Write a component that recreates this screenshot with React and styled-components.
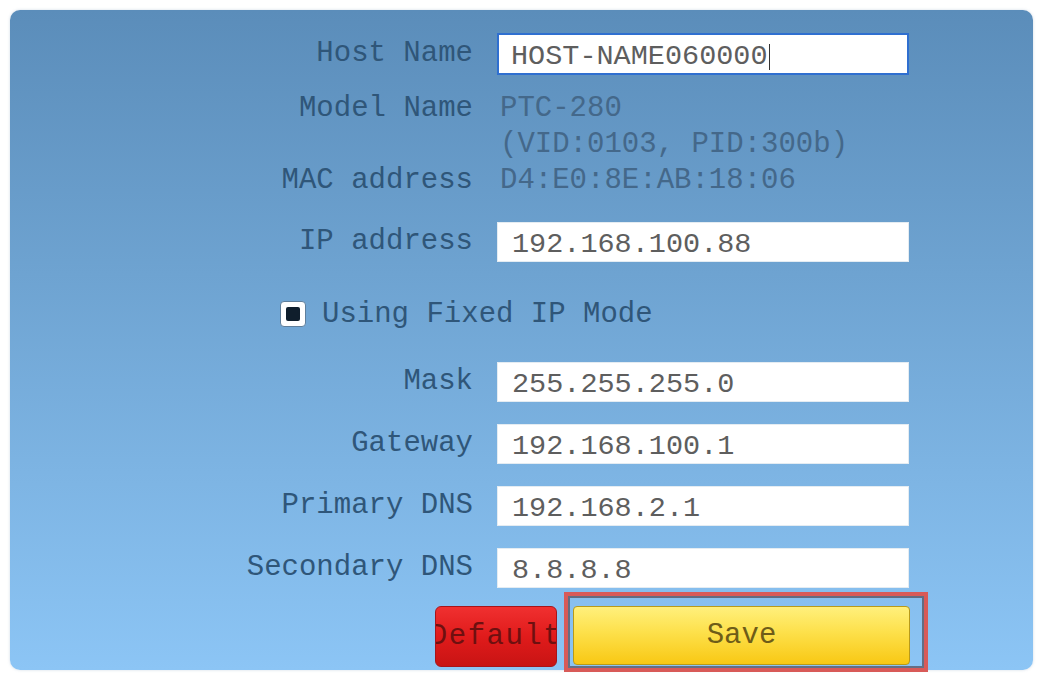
// 네트워크 설정 패널
import React from "react";
import styled, { createGlobalStyle } from "styled-components";

const GlobalStyle = createGlobalStyle`
  html, body {
    margin: 0;
    padding: 0;
    background: #ffffff;
  }
  body {
    font-family: "Liberation Mono", "Courier New", monospace;
  }
`;

const Page = styled.div`
  width: 1037px;
  height: 676px;
  padding: 10px 4px 6px 10px;
  box-sizing: border-box;
`;

const Panel = styled.div`
  position: relative;
  width: 1023px;
  height: 660px;
  box-sizing: border-box;
  border-radius: 10px;
  background: linear-gradient(180deg, #5b8dba 0%, #6ea3d1 40%, #8cc5f5 100%);
  box-shadow: 0 0 3px rgba(120, 150, 180, 0.35);
  padding-top: 23px;
  display: flex;
  flex-direction: column;
`;

const Row = styled.div`
  display: grid;
  grid-template-columns: 463px 412px;
  column-gap: 24px;
  align-items: center;
  height: ${(p) => p.$h || 40}px;
  margin-top: ${(p) => p.$mt || 0}px;
`;

const Label = styled.div`
  text-align: right;
  font-size: 29px;
  color: #2f5679;
  white-space: nowrap;
  line-height: 36px;
`;

const Value = styled.div`
  font-size: 29px;
  color: #44688a;
  white-space: nowrap;
  line-height: 36px;
  padding-left: 3px;
`;

const Field = styled.div`
  height: 100%;
  box-sizing: border-box;
  background: #ffffff;
  border: ${(p) => (p.$focus ? "2px solid #2f6fd0" : "1px solid #e4ecf2")};
  display: flex;
  align-items: center;
  padding-left: ${(p) => (p.$focus ? 12 : 14)}px;
  padding-top: 5px;
  font-family: "Liberation Mono", monospace;
  font-size: 28.5px;
  color: #5e5e5e;
  white-space: nowrap;
`;

const Caret = styled.span`
  display: inline-block;
  width: 1px;
  height: 26px;
  background: #333;
  margin-left: 1px;
`;

const CheckRow = styled.div`
  display: flex;
  align-items: center;
  height: 40px;
  margin-top: 32px;
  padding-left: 270px;
  gap: 16px;
`;

const CheckBox = styled.div`
  width: 26px;
  height: 26px;
  box-sizing: border-box;
  background: #ffffff;
  border: 1px solid #5f7f9c;
  border-radius: 4px;
  display: flex;
  align-items: center;
  justify-content: center;

  &::after {
    content: "";
    width: 14px;
    height: 14px;
    border-radius: 2px;
    background: #0f1e2c;
  }
`;

const CheckText = styled.span`
  font-size: 29px;
  color: #2f5679;
  white-space: nowrap;
`;

const ButtonRow = styled.div`
  display: flex;
  align-items: flex-start;
  margin-top: 18px;
  padding-left: 425px;
  gap: 16px;
`;

const DefaultButton = styled.div`
  width: 122px;
  height: 61px;
  box-sizing: border-box;
  border-radius: 6px;
  border: 1px solid #a8141a;
  background: linear-gradient(180deg, #f03030 0%, #e01b1b 50%, #c81414 100%);
  display: flex;
  align-items: center;
  justify-content: center;
  overflow: hidden;
  font-size: 29px;
  letter-spacing: 1.5px;
  color: #6e1010;
  white-space: nowrap;
`;

const SaveWrap = styled.div`
  position: relative;
`;

const SaveButton = styled.div`
  width: 337px;
  height: 59px;
  box-sizing: border-box;
  border-radius: 4px;
  border: 1px solid #b89a1a;
  background: linear-gradient(180deg, #fff07c 0%, #fde04a 45%, #f8c814 100%);
  display: flex;
  align-items: center;
  justify-content: center;
  font-size: 29px;
  color: #6e5c18;
`;

const Highlight = styled.div`
  position: absolute;
  left: -9px;
  top: -14px;
  width: 364px;
  height: 80px;
  box-sizing: border-box;
  border: 4px solid #d85a58;
  box-shadow: inset 0 0 0 2px rgba(70, 40, 40, 0.55);
  pointer-events: none;
`;

const App = () => {
  return (
    <>
      <GlobalStyle />
      <Page>
        <Panel>
          <Row $h={36}>
            <Label>Host Name</Label>
            <Field $focus>
              HOST-NAME060000
              <Caret />
            </Field>
          </Row>
          <Row $h={36} $mt={22}>
            <Label>Model Name</Label>
            <Value>PTC-280</Value>
          </Row>
          <Row $h={36}>
            <Label />
            <Value>(VID:0103, PID:300b)</Value>
          </Row>
          <Row $h={36}>
            <Label>MAC address</Label>
            <Value>D4:E0:8E:AB:18:06</Value>
          </Row>
          <Row $mt={23}>
            <Label>IP address</Label>
            <Field>192.168.100.88</Field>
          </Row>
          <CheckRow>
            <CheckBox />
            <CheckText>Using Fixed IP Mode</CheckText>
          </CheckRow>
          <Row $mt={28}>
            <Label>Mask</Label>
            <Field>255.255.255.0</Field>
          </Row>
          <Row $mt={22}>
            <Label>Gateway</Label>
            <Field>192.168.100.1</Field>
          </Row>
          <Row $mt={22}>
            <Label>Primary DNS</Label>
            <Field>192.168.2.1</Field>
          </Row>
          <Row $mt={22}>
            <Label>Secondary DNS</Label>
            <Field>8.8.8.8</Field>
          </Row>
          <ButtonRow>
            <DefaultButton>Default</DefaultButton>
            <SaveWrap>
              <SaveButton>Save</SaveButton>
              <Highlight />
            </SaveWrap>
          </ButtonRow>
        </Panel>
      </Page>
    </>
  );
};

export default App;
